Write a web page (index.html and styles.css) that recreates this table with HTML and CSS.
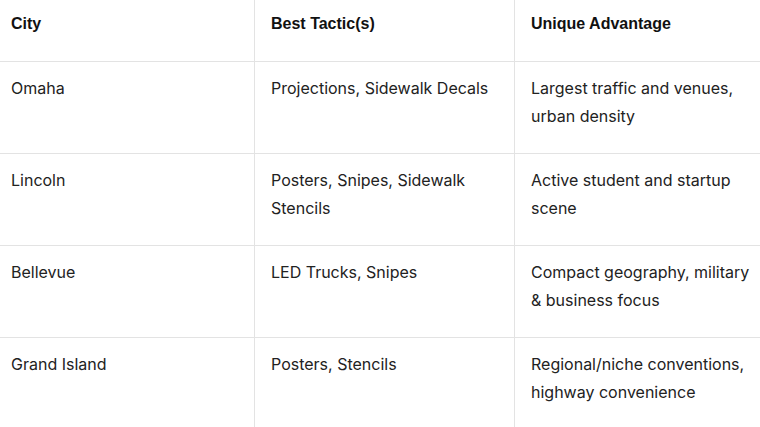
FILE: index.html
```html
<!DOCTYPE html>
<html>
<head>
<meta charset="utf-8">
<link rel="stylesheet" href="styles.css">
</head>
<body>
<table class="grid">
  <thead>
    <tr class="head-row">
      <th>City</th>
      <th>Best Tactic(s)</th>
      <th>Unique Advantage</th>
    </tr>
  </thead>
  <tbody>
    <tr class="body-row">
      <td>Omaha</td>
      <td>Projections, Sidewalk Decals</td>
      <td>Largest traffic and venues, urban density</td>
    </tr>
    <tr class="body-row">
      <td>Lincoln</td>
      <td>Posters, Snipes, Sidewalk Stencils</td>
      <td>Active student and startup scene</td>
    </tr>
    <tr class="body-row">
      <td>Bellevue</td>
      <td>LED Trucks, Snipes</td>
      <td>Compact geography, military &amp; business focus</td>
    </tr>
    <tr class="body-row">
      <td>Grand Island</td>
      <td>Posters, Stencils</td>
      <td>Regional/niche conventions, highway convenience</td>
    </tr>
  </tbody>
</table>
</body>
</html>
```

FILE: styles.css
```css
html, body {
  margin: 0;
  padding: 0;
  background: #ffffff;
  overflow: hidden;
}

.grid {
  border-collapse: collapse;
  table-layout: fixed;
  width: 780px;
  margin-left: -6px;
  font-family: "Inter", "Liberation Sans", sans-serif;
  font-size: 16px;
  line-height: 28px;
  color: #222222;
}

.grid th,
.grid td {
  width: 260px;
  text-align: left;
  vertical-align: top;
  box-sizing: border-box;
  border: 1px solid #e3e3e3;
  padding: 0 16px;
}

.grid th {
  font-family: "Liberation Sans", Arial, sans-serif;
  font-weight: 700;
  color: #111111;
  border-top: none;
  height: 61px;
  padding-top: 10px;
}

.grid td {
  height: 92px;
  padding-top: 12px;
}
```
